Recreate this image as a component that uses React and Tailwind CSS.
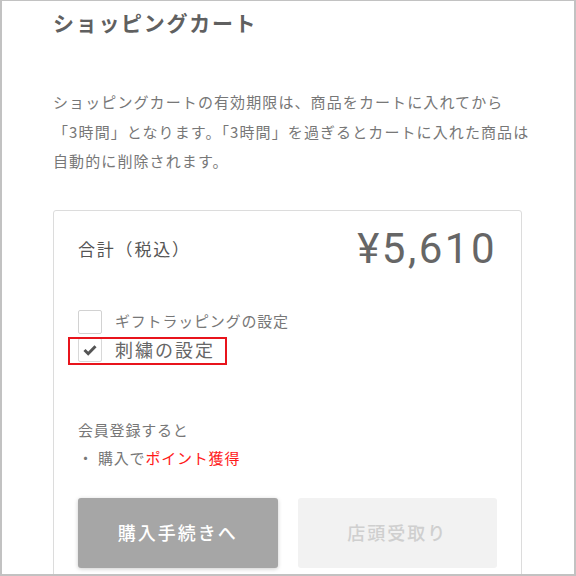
export default function App() {
  const jp = { fontFamily: '"Noto Sans CJK JP", "Noto Sans", sans-serif' };
  return (
    <div
      className="w-[576px] h-[576px] overflow-hidden bg-white border-x-2 border-t border-b-2 border-[#c2c2c2] pl-[51px] pr-[52px]"
      style={jp}
    >
      <h1 className="mt-[7px] text-[21px] leading-[28px] font-bold tracking-[1.7px] text-[#606060]">
        ショッピングカート
      </h1>
      <p className="mt-[51px] text-[15px] leading-[29.5px] tracking-[1.1px] text-[#777] whitespace-nowrap">
        ショッピングカートの有効期限は、商品をカートに入れてから
        <br />
        「3時間」となります。「3時間」を過ぎるとカートに入れた商品は
        <br />
        自動的に削除されます。
      </p>
      <div className="mt-[34px] w-[469px] h-[400px] border border-[#dcdcdc] rounded-[3px] px-[24px] pt-[17px]">
        <div className="flex items-center justify-between h-[42px]">
          <span className="text-[17px] tracking-[1.8px] text-[#555]">合計（税込）</span>
          <span
            className="text-[42px] leading-none tracking-[2.5px] text-[#666]"
            style={{ fontFamily: 'Roboto, "Noto Sans", sans-serif' }}
          >
            ¥5,610
          </span>
        </div>
        <div className="mt-[40px] flex flex-col gap-[4px]">
          <div className="flex items-center h-[24px]">
            <span className="w-[24px] h-[24px] border border-[#d2d2d2] rounded-[2px] bg-white shrink-0" />
            <span className="ml-[13px] text-[15px] tracking-[0.8px] text-[#777]">
              ギフトラッピングの設定
            </span>
          </div>
          <div className="relative flex items-center h-[24px]">
            <span className="w-[24px] h-[24px] border border-[#d8d8d8] rounded-[2px] bg-white shrink-0 flex items-center justify-center">
              <svg width="16" height="16" viewBox="0 0 16 16">
                <path d="M2.5 8 L6.2 11.7 L13.5 4.3" fill="none" stroke="#555" strokeWidth="3" />
              </svg>
            </span>
            <span className="ml-[13px] text-[18px] tracking-[2px] text-[#666]">刺繍の設定</span>
            <span className="absolute left-[-10px] top-[-1px] w-[159px] h-[28px] border-2 border-[#e8141c]" />
          </div>
        </div>
        <div className="mt-[54px] text-[15px] leading-[28px] tracking-[0.8px] text-[#777]">
          <div>会員登録すると</div>
          <div>
            ・ 購入で<span className="text-[#ff1a1a]">ポイント獲得</span>
          </div>
        </div>
        <div className="mt-[26px] grid grid-cols-2 gap-[20px]">
          <button className="h-[70px] rounded-[3px] bg-[#a6a6a6] shadow-[0_1px_4px_rgba(0,0,0,0.2)] text-white text-[18px] font-medium tracking-[2px]">
            購入手続きへ
          </button>
          <button className="h-[70px] rounded-[3px] bg-[#f2f2f2] text-[#cfcfcf] text-[18px] font-medium tracking-[2px]">
            店頭受取り
          </button>
        </div>
      </div>
    </div>
  );
}
